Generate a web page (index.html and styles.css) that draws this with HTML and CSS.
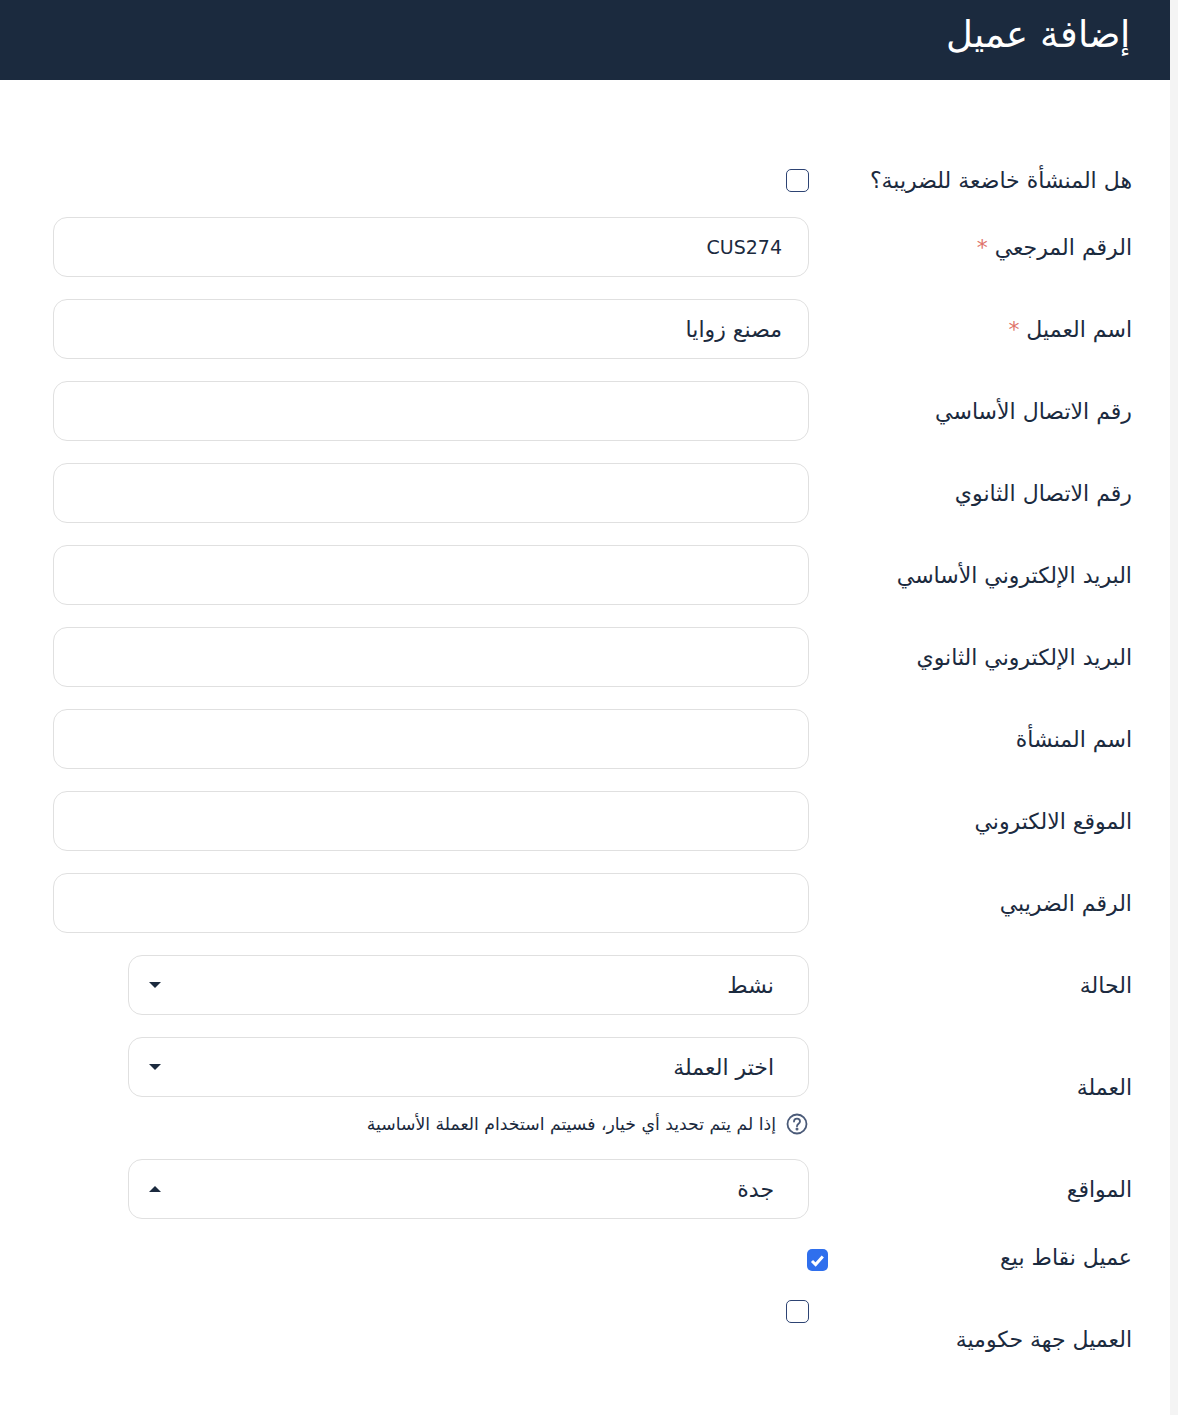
FILE: index.html
```html
<!DOCTYPE html>
<html lang="ar" dir="rtl">
<head>
    <meta charset="utf-8">
    <title>إضافة عميل</title>
    <link rel="stylesheet" href="styles.css">
</head>
<body>
    <div class="page">
        <div class="page-header">
            <h1>إضافة عميل</h1>
        </div>
        <form class="customer-form">
            <div class="form-row row-check">
                <label class="form-label">هل المنشأة خاضعة للضريبة؟</label>
                <div class="form-field"><span class="check"></span></div>
            </div>
            <div class="form-row">
                <label class="form-label">الرقم المرجعي <span class="req">*</span></label>
                <div class="form-field"><input class="form-input input-latin" type="text" value="CUS274"></div>
            </div>
            <div class="form-row">
                <label class="form-label">اسم العميل <span class="req">*</span></label>
                <div class="form-field"><input class="form-input" type="text" value="مصنع زوايا"></div>
            </div>
            <div class="form-row">
                <label class="form-label">رقم الاتصال الأساسي</label>
                <div class="form-field"><input class="form-input" type="text"></div>
            </div>
            <div class="form-row">
                <label class="form-label">رقم الاتصال الثانوي</label>
                <div class="form-field"><input class="form-input" type="text"></div>
            </div>
            <div class="form-row">
                <label class="form-label">البريد الإلكتروني الأساسي</label>
                <div class="form-field"><input class="form-input" type="text"></div>
            </div>
            <div class="form-row">
                <label class="form-label">البريد الإلكتروني الثانوي</label>
                <div class="form-field"><input class="form-input" type="text"></div>
            </div>
            <div class="form-row">
                <label class="form-label">اسم المنشأة</label>
                <div class="form-field"><input class="form-input" type="text"></div>
            </div>
            <div class="form-row">
                <label class="form-label">الموقع الالكتروني</label>
                <div class="form-field"><input class="form-input" type="text"></div>
            </div>
            <div class="form-row">
                <label class="form-label">الرقم الضريبي</label>
                <div class="form-field"><input class="form-input" type="text"></div>
            </div>
            <div class="form-row">
                <label class="form-label">الحالة</label>
                <div class="form-field">
                    <div class="form-select"><span>نشط</span><i class="caret"></i></div>
                </div>
            </div>
            <div class="form-row">
                <label class="form-label">العملة</label>
                <div class="form-field">
                    <div class="form-select"><span>اختر العملة</span><i class="caret"></i></div>
                    <div class="hint">
                        <svg width="22" height="22" viewBox="0 0 22 22" fill="none" stroke="#4a5a78" stroke-width="1.8">
                            <circle cx="11" cy="11" r="9.5"/>
                            <path d="M8 8.600c0-1.800 1.400-2.900 3-2.900s3 1.100 3 2.700c0 2.300-3 2.500-3 4.800" stroke-linecap="round"/>
                            <circle cx="11" cy="16" r=".6" fill="#4a5a78"/>
                        </svg>
                        <span>إذا لم يتم تحديد أي خيار، فسيتم استخدام العملة الأساسية</span>
                    </div>
                </div>
            </div>
            <div class="form-row">
                <label class="form-label">المواقع</label>
                <div class="form-field">
                    <div class="form-select"><span>جدة</span><i class="caret caret-up"></i></div>
                </div>
            </div>
            <div class="form-row row-pos">
                <label class="form-label">عميل نقاط بيع</label>
                <div class="form-field">
                    <span class="check check-on">
                        <svg width="15" height="15" viewBox="0 0 15 15" fill="none" stroke="#fff" stroke-width="3"><path d="M2 8l3.600 3.600 7.200-8"/></svg>
                    </span>
                </div>
            </div>
            <div class="form-row row-gov">
                <label class="form-label">العميل جهة حكومية</label>
                <div class="form-field"><span class="check"></span></div>
            </div>
        </form>
    </div>
</body>
</html>
```

FILE: styles.css
```css
* {
    box-sizing: border-box;
}

body {
    margin: 0;
    background: #f4f4f4;
    color: #1b2a3e;
    font-family: "DejaVu Sans", "Noto Sans", sans-serif;
    height: 1415px;
    overflow: hidden;
}

.page {
    width: 1170px;
    height: 100%;
    margin-right: 8px;
    background: #fff;
}

.page-header {
    height: 80px;
    background: #1b2a3e;
    padding: 0 40px 12px;
    display: flex;
    align-items: center;
}

.page-header h1 {
    margin: 0;
    color: #fff;
    font-size: 37px;
    font-weight: 200;
}

.customer-form {
    padding: 85px 0 0 53px;
}

.form-row {
    display: flex;
    align-items: center;
    margin-bottom: 22px;
}

.form-label {
    width: 361px;
    padding-right: 38px;
    font-size: 22px;
}

.req {
    color: #e0736b;
    font-size: 22px;
}

.form-field {
    width: 756px;
}

.form-input {
    display: block;
    width: 100%;
    height: 60px;
    padding: 0 26px;
    border: 1px solid #e0e0e0;
    border-radius: 14px;
    background: #fff;
    color: #1b2a3e;
    font-family: inherit;
    font-size: 22px;
}

.input-latin {
    font-size: 19px;
}

.form-select {
    display: flex;
    align-items: center;
    justify-content: space-between;
    width: 681px;
    height: 60px;
    padding: 0 34px 0 20px;
    border: 1px solid #e0e0e0;
    border-radius: 14px;
    font-size: 22px;
}

.caret {
    width: 0;
    height: 0;
    border-left: 6px solid transparent;
    border-right: 6px solid transparent;
    border-top: 6px solid #1b2a3e;
}

.caret-up {
    border-top: 0;
    border-bottom: 6px solid #1b2a3e;
}

.hint {
    display: flex;
    align-items: center;
    gap: 10px;
    height: 40px;
    padding: 14px 1px 0 0;
    font-size: 17.25px;
}

.check {
    display: block;
    width: 23px;
    height: 23px;
    border: 1px solid #2d4373;
    border-radius: 5px;
    background: #fff;
}

.check-on {
    display: flex;
    align-items: center;
    justify-content: center;
    width: 21px;
    height: 22px;
    margin-right: -19px;
    border: 0;
    background: #2f6fed;
}

.row-check {
    height: 30px;
}

.row-pos {
    align-items: flex-start;
    height: 22px;
    margin: 30px 0 29px;
}

.row-pos .form-label {
    margin-top: -4px;
}

.row-gov {
    align-items: flex-start;
}

.row-gov .form-label {
    margin-top: 27px;
}
```
